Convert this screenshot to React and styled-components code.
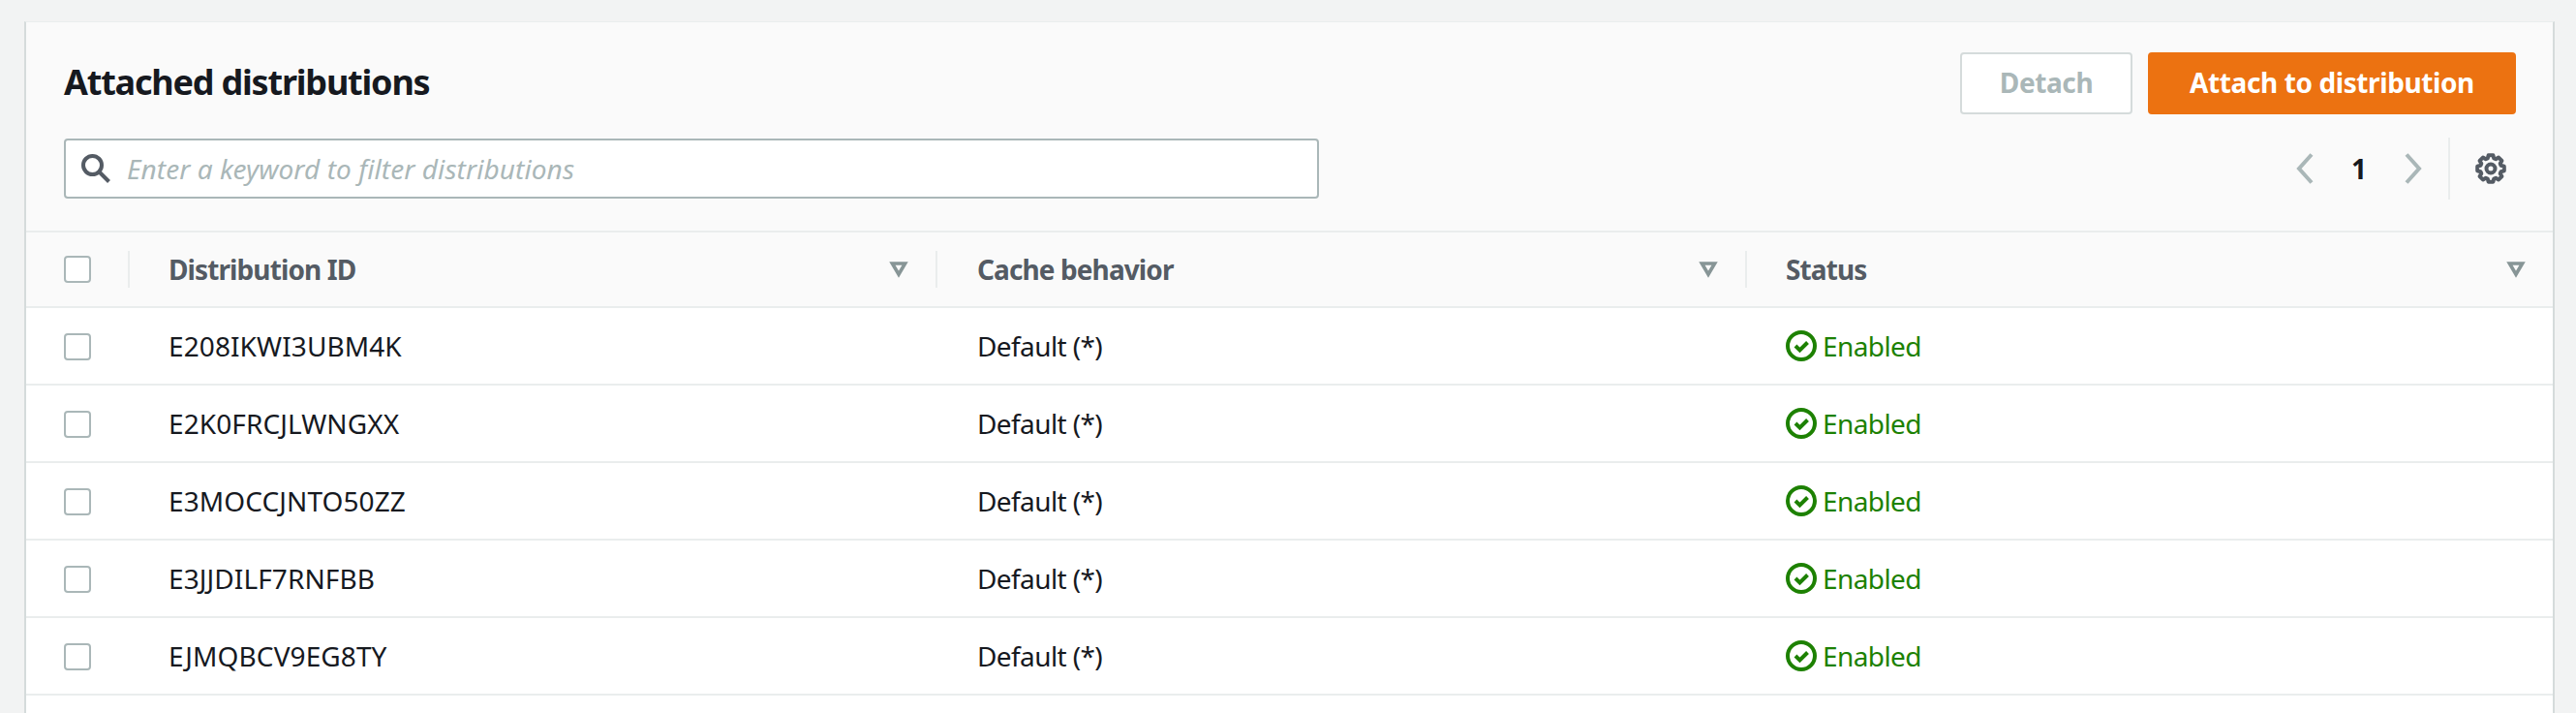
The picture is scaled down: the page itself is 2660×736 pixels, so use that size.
import styled, { createGlobalStyle } from "styled-components";

const GlobalStyle = createGlobalStyle`
  html, body {
    margin: 0;
    height: 100%;
    overflow: hidden;
    background: #f2f3f3;
  }
  body {
    font-family: "Noto Sans", "Open Sans", sans-serif;
    color: #16191f;
  }
`;

const COLUMNS = "105px 834px 836px 1fr";

const Page = styled.div`
  height: 736px;
  padding: 22px 22px 0 25px;
  box-sizing: border-box;
  overflow: hidden;
`;

const Card = styled.section`
  background: #fff;
  height: 100%;
  border-left: 2px solid #d5dbdb;
  border-right: 2px solid #d5dbdb;
  border-top: 1px solid #eaeded;
  box-sizing: border-box;
`;

const Toolbar = styled.header`
  background: #fafafa;
  height: 217px;
  padding: 31px 38px 0 39px;
  box-sizing: border-box;
  border-bottom: 2px solid #eaeded;
`;

const TitleRow = styled.div`
  display: flex;
  align-items: center;
  justify-content: space-between;
  height: 64px;
`;

const Title = styled.h2`
  margin: -3px 0 0;
  font-size: 36px;
  font-weight: 700;
  letter-spacing: -1.2px;
`;

const Actions = styled.div`
  display: flex;
  gap: 16px;
`;

const Button = styled.button`
  height: 64px;
  width: ${(props) => props.width}px;
  padding: 0 0 2px;
  border-radius: 4px;
  box-sizing: border-box;
  font-family: inherit;
  font-size: 28px;
  font-weight: 700;
  letter-spacing: -0.4px;
  background: ${(props) => (props.primary ? "#ec7211" : "#fff")};
  color: ${(props) => (props.primary ? "#fff" : "#aab7b8")};
  border: 2px solid ${(props) => (props.primary ? "#ec7211" : "#d5dbdb")};
`;

const FilterRow = styled.div`
  display: flex;
  align-items: center;
  justify-content: space-between;
  margin-top: 25px;
  height: 62px;
`;

const SearchBox = styled.div`
  display: flex;
  align-items: center;
  width: 1296px;
  height: 62px;
  box-sizing: border-box;
  background: #fff;
  border: 2px solid #aab7b8;
  border-radius: 4px;
  padding-left: 16px;
`;

const SearchText = styled.span`
  margin-left: 17px;
  font-size: 28px;
  font-style: italic;
  color: #aab7b8;
  letter-spacing: 0.08px;
`;

const Pager = styled.div`
  display: flex;
  align-items: center;
  height: 62px;
  padding-right: 10px;
`;

const PageNumber = styled.span`
  width: 94px;
  text-align: center;
  font-size: 28px;
  font-weight: 700;
`;

const PagerDivider = styled.div`
  width: 2px;
  height: 64px;
  background: #eaeded;
  margin: 0 26px 0 27px;
`;

const HeaderRow = styled.div`
  display: grid;
  grid-template-columns: ${COLUMNS};
  align-items: center;
  height: 78px;
  background: #fafafa;
  border-bottom: 2px solid #eaeded;
  box-sizing: border-box;
`;

const HeaderCell = styled.div`
  display: flex;
  align-items: center;
  font-size: 28px;
  font-weight: 700;
  color: #545b64;
  letter-spacing: -0.9px;
  padding-right: 28px;
`;

const ColumnDivider = styled.span`
  width: 2px;
  height: 38px;
  background: #eaeded;
  margin-right: ${(props) => props.gap}px;
`;

const FilterIcon = styled.svg`
  margin-left: auto;
  width: 20px;
  height: 17px;
`;

const Row = styled.div`
  display: grid;
  grid-template-columns: ${COLUMNS};
  align-items: center;
  height: 80px;
  border-bottom: 2px solid #eaeded;
  box-sizing: border-box;
  font-size: 28px;
`;

const Cell = styled.div`
  padding-left: ${(props) => props.inset}px;
  letter-spacing: ${(props) => props.spacing || -0.6}px;
`;

const SelectCell = styled.div`
  padding: ${(props) => (props.body ? "2px" : "0")} 0 0 39px;
  display: flex;
  align-items: center;
`;

const Checkbox = styled.span`
  display: block;
  width: 28px;
  height: 28px;
  box-sizing: border-box;
  border: 2px solid #aab7b8;
  border-radius: 4px;
  background: #fff;
`;

const Status = styled.div`
  display: flex;
  align-items: center;
  gap: 6px;
  padding-left: 42px;
  color: #1d8102;
  letter-spacing: -0.6px;
`;

const rows = [
  "E208IKWI3UBM4K",
  "E2K0FRCJLWNGXX",
  "E3MOCCJNTO50ZZ",
  "E3JJDILF7RNFBB",
  "EJMQBCV9EG8TY",
];

const columns = [
  { label: "Distribution ID", gap: 40 },
  { label: "Cache behavior", gap: 41 },
  { label: "Status", gap: 40 },
];

// eight squared teeth around the ring
const gearPath = () => {
  const points = [];
  for (let i = 0; i < 8; i++) {
    const mid = (i * Math.PI) / 4;
    [
      [11, -0.3],
      [14, -0.17],
      [14, 0.17],
      [11, 0.3],
    ].forEach(([r, offset]) => {
      const a = mid + offset;
      points.push(`${(16 + r * Math.cos(a)).toFixed(2)} ${(16 + r * Math.sin(a)).toFixed(2)}`);
    });
  }
  return `M${points.join("L")}Z`;
};

function Funnel() {
  return (
    <FilterIcon viewBox="0 0 20 17" fill="none" stroke="#879596" strokeWidth="3.6">
      <path d="M3.4 2h13.2L10 13.2z" />
    </FilterIcon>
  );
}

function Chevron({ left }) {
  return (
    <svg width="18" height="32" viewBox="0 0 18 32" fill="none" stroke="#aab7b8" strokeWidth="4">
      <path d={left ? "M16 1.5 3 16l13 14.5" : "M2 1.5 15 16 2 30.5"} />
    </svg>
  );
}

function Gear() {
  return (
    <svg width="32" height="32" viewBox="0 0 32 32" fill="none" stroke="#545b64" strokeWidth="4">
      <circle cx="16" cy="16" r="4.5" />
      <path d={gearPath()} strokeLinejoin="round" />
    </svg>
  );
}

function SearchIcon() {
  return (
    <svg width="30" height="30" viewBox="0 0 30 30" fill="none" stroke="#545b64" strokeWidth="4">
      <circle cx="11.5" cy="11.5" r="9.5" />
      <path d="M18 18l10.5 10.5" />
    </svg>
  );
}

function CheckCircle() {
  return (
    <svg width="32" height="32" viewBox="0 0 32 32" fill="none" stroke="#1d8102" strokeWidth="4">
      <circle cx="16" cy="16" r="14" />
      <path d="M10 16l4.5 4.5 8-8" />
    </svg>
  );
}

export default function App() {
  return (
    <>
      <GlobalStyle />
      <Page>
        <Card>
          <Toolbar>
            <TitleRow>
              <Title>Attached distributions</Title>
              <Actions>
                <Button width={178}>Detach</Button>
                <Button primary width={380}>Attach to distribution</Button>
              </Actions>
            </TitleRow>
            <FilterRow>
              <SearchBox>
                <SearchIcon />
                <SearchText>Enter a keyword to filter distributions</SearchText>
              </SearchBox>
              <Pager>
                <Chevron left />
                <PageNumber>1</PageNumber>
                <Chevron />
                <PagerDivider />
                <Gear />
              </Pager>
            </FilterRow>
          </Toolbar>
          <HeaderRow>
            <SelectCell>
              <Checkbox />
            </SelectCell>
            {columns.map((col) => (
              <HeaderCell key={col.label}>
                <ColumnDivider gap={col.gap} />
                {col.label}
                <Funnel />
              </HeaderCell>
            ))}
          </HeaderRow>
          {rows.map((id) => (
            <Row key={id}>
              <SelectCell body>
                <Checkbox />
              </SelectCell>
              <Cell inset={42} spacing={0.1}>{id}</Cell>
              <Cell inset={43}>Default (*)</Cell>
              <Status>
                <CheckCircle />
                Enabled
              </Status>
            </Row>
          ))}
        </Card>
      </Page>
    </>
  );
}
